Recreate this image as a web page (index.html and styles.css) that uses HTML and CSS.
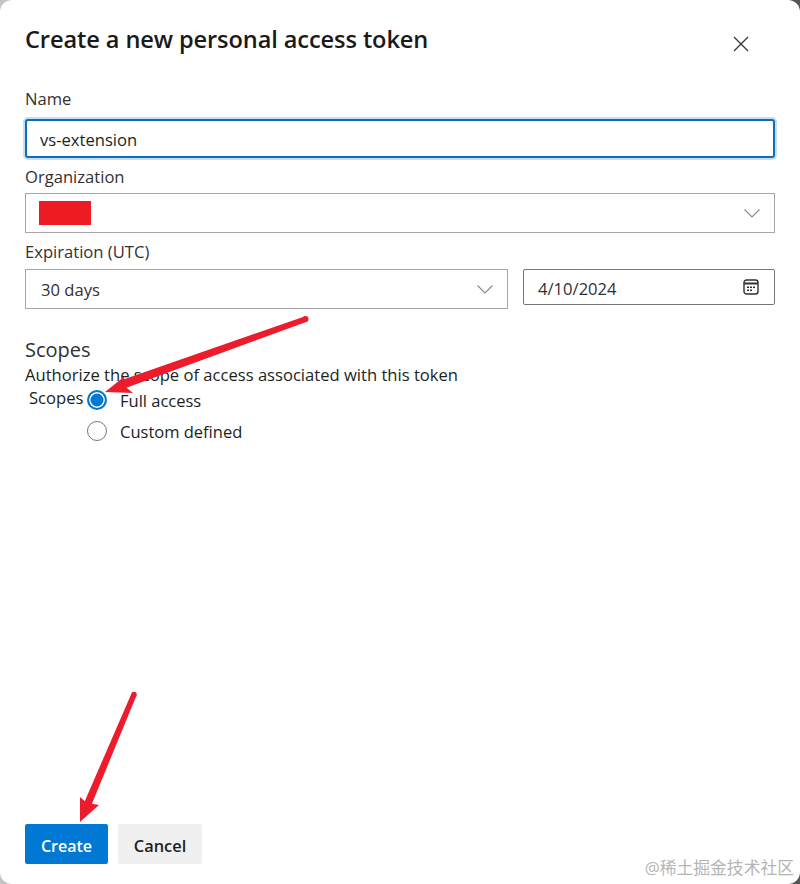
FILE: index.html
```html
<!DOCTYPE html>
<html lang="en">
<head>
<meta charset="utf-8">
<title>Create a new personal access token</title>
<link rel="stylesheet" href="styles.css">
</head>
<body>
<main class="dialog">
  <header class="head">
    <h1 class="title">Create a new personal access token</h1>
    <button class="close" aria-label="Close">
      <svg width="16" height="16" viewBox="0 0 16 16"><path d="M1 1 15 15M15 1 1 15" class="stroke-dark"/></svg>
    </button>
  </header>
  <label class="label label-name">Name</label>
  <div class="field focused"><span class="val">vs-extension</span></div>
  <label class="label label-org">Organization</label>
  <div class="field select org">
    <span class="redact"></span>
    <svg class="chev" width="16" height="9" viewBox="0 0 16 9"><path d="M.5.5 8 8l7.500-7.500" class="stroke-grey"/></svg>
  </div>
  <label class="label label-exp">Expiration (UTC)</label>
  <div class="row">
    <div class="field select days"><span class="val val-days">30 days</span>
      <svg class="chev" width="16" height="9" viewBox="0 0 16 9"><path d="M.5.5 8 8l7.500-7.500" class="stroke-grey"/></svg>
    </div>
    <div class="field date"><span class="val val-date">4/10/2024</span>
      <svg width="16" height="16" viewBox="0 0 16 16"><rect x="1" y="1" width="14" height="14" rx="2.500" class="stroke-cal"/><path d="M1 4.500h14" class="stroke-cal band"/><path d="M4 7.500h2v1.500H4zM7 7.500h2v1.500H7zM10 7.500h2v1.500h-2zM4 10.500h2V12H4zM7 10.500h2V12H7z" class="dots"/></svg>
    </div>
  </div>
  <h2 class="scopes-title">Scopes</h2>
  <p class="scopes-desc">Authorize the scope of access associated with this token</p>
  <div class="radio-group">
    <span class="group-label">Scopes</span>
    <div class="radios">
      <div class="radio-row"><span class="radio on"></span><span class="radio-text">Full access</span></div>
      <div class="radio-row second"><span class="radio"></span><span class="radio-text">Custom defined</span></div>
    </div>
  </div>
  <footer class="actions">
    <button class="btn primary">Create</button>
    <button class="btn">Cancel</button>
  </footer>
</main>
<svg class="arrows" width="800" height="884" viewBox="0 0 800 884" aria-hidden="true">
  <path d="M304.500 316.500 307.500 321.500 123 389 119 381Z" class="arrow-head"/>
  <circle cx="305.500" cy="319" r="3" class="arrow-head"/>
  <path d="M105 392 125 376 122 384 133 393Z" class="arrow-head"/>
  <path d="M131.500 693.500 136.500 695.500 91 806 84 803Z" class="arrow-head"/>
  <circle cx="134" cy="694.500" r="2.700" class="arrow-head"/>
  <path d="M80 822 80 797 87 803 99 805Z" class="arrow-head"/>
</svg>
<div class="watermark">@稀土掘金技术社区</div>
</body>
</html>
```
FILE: styles.css
```css
* { box-sizing: border-box; }
html, body { margin: 0; height: 884px; overflow: hidden; background: linear-gradient(to right, #c4c4c4, #555); }
body { position: relative; font-family: "Open Sans", "Noto Sans CJK SC", sans-serif; color: #201f1e; }
.dialog { width: 800px; height: 884px; background: #fff; border-radius: 12px; padding: 22px 25px 20px; display: flex; flex-direction: column; }
.head { display: flex; justify-content: space-between; align-items: flex-start; height: 56px; }
.title { margin: 0; font-size: 23.600px; line-height: 34px; font-weight: 600; letter-spacing: -0.1px; color: #1b1a19; }
.close { width: 16px; height: 16px; margin: 14px 26px 0 0; padding: 0; border: 0; background: none; }
.close svg, .field svg { display: block; }
.stroke-dark { fill: none; stroke: #323130; stroke-width: 1.200; }
.stroke-cal { fill: none; stroke: #323130; stroke-width: 1.400; }
.band { stroke-width: 2; }
.stroke-grey { fill: none; stroke: #8a8886; stroke-width: 1.100; }
.dots { fill: #323130; }
.label { display: block; font-size: 16.600px; line-height: 24px; color: #323130; height: 24px; }
.label-name { margin-top: 9px; }
.label-org { margin-top: 7px; }
.label-exp { margin-top: 7px; }
.field { display: flex; align-items: center; justify-content: space-between; height: 40px; border: 1px solid #a6a6a6; font-size: 16.600px; padding: 0 14px 0 15px; background: #fff; color: #323130; }
.val { padding-top: 2px; }
.val-days { padding-top: 0; }
.val-date { padding-top: 2px; }
.focused { margin-top: 8px; height: 39px; border: 2px solid #0f6cbd; border-radius: 3px; box-shadow: 0 0 0 2px #c3e0f7; padding-left: 13px; color: #201f1e; }
.org { margin-top: 4px; padding-left: 13px; }
.redact { width: 52px; height: 24px; background: #ed1c24; }
.row { display: flex; gap: 15px; margin-top: 5px; align-items: flex-start; }
.days { width: 483px; flex: none; }
.date { flex: 1; height: 36px; border-color: #767676; border-radius: 2px; padding: 0 15px 0 14px; }
.scopes-title { margin: 26px 0 0; font-size: 20px; line-height: 30px; font-weight: 400; color: #323130; }
.scopes-desc { margin: 0; font-size: 16.600px; line-height: 20px; color: #201f1e; }
.radio-group { display: flex; margin-top: 1px; }
.group-label { width: 62px; padding-left: 4px; font-size: 16.600px; line-height: 24px; }
.radios { font-size: 16.500px; padding-top: 1px; }
.radio-row { display: flex; align-items: center; gap: 13px; height: 26px; }
.radio-text { padding-top: 0; }
.second { margin-top: 5px; }
.radio { width: 20px; height: 20px; border-radius: 50%; border: 1px solid #767676; background: #fff; flex: none; }
.radio.on { border: 2px solid #0078d4; background: #0078d4; box-shadow: inset 0 0 0 1.500px #fff; }
.actions { margin-top: auto; display: flex; gap: 10px; }
.btn { height: 40px; width: 84px; border: 0; border-radius: 2px; background: #f0f0f0; font: 600 16.400px "Open Sans", sans-serif; color: #201f1e; padding: 3px 0 0; }
.primary { width: 83px; background: #0078d4; color: #fff; font-size: 16px; }
.arrows { position: absolute; left: 0; top: 0; pointer-events: none; }
.arrow-head { fill: #ec1c2c; }
.watermark { position: absolute; right: 6px; top: 857px; font-size: 16.800px; line-height: 22px; color: #b5b5b5; }
```
